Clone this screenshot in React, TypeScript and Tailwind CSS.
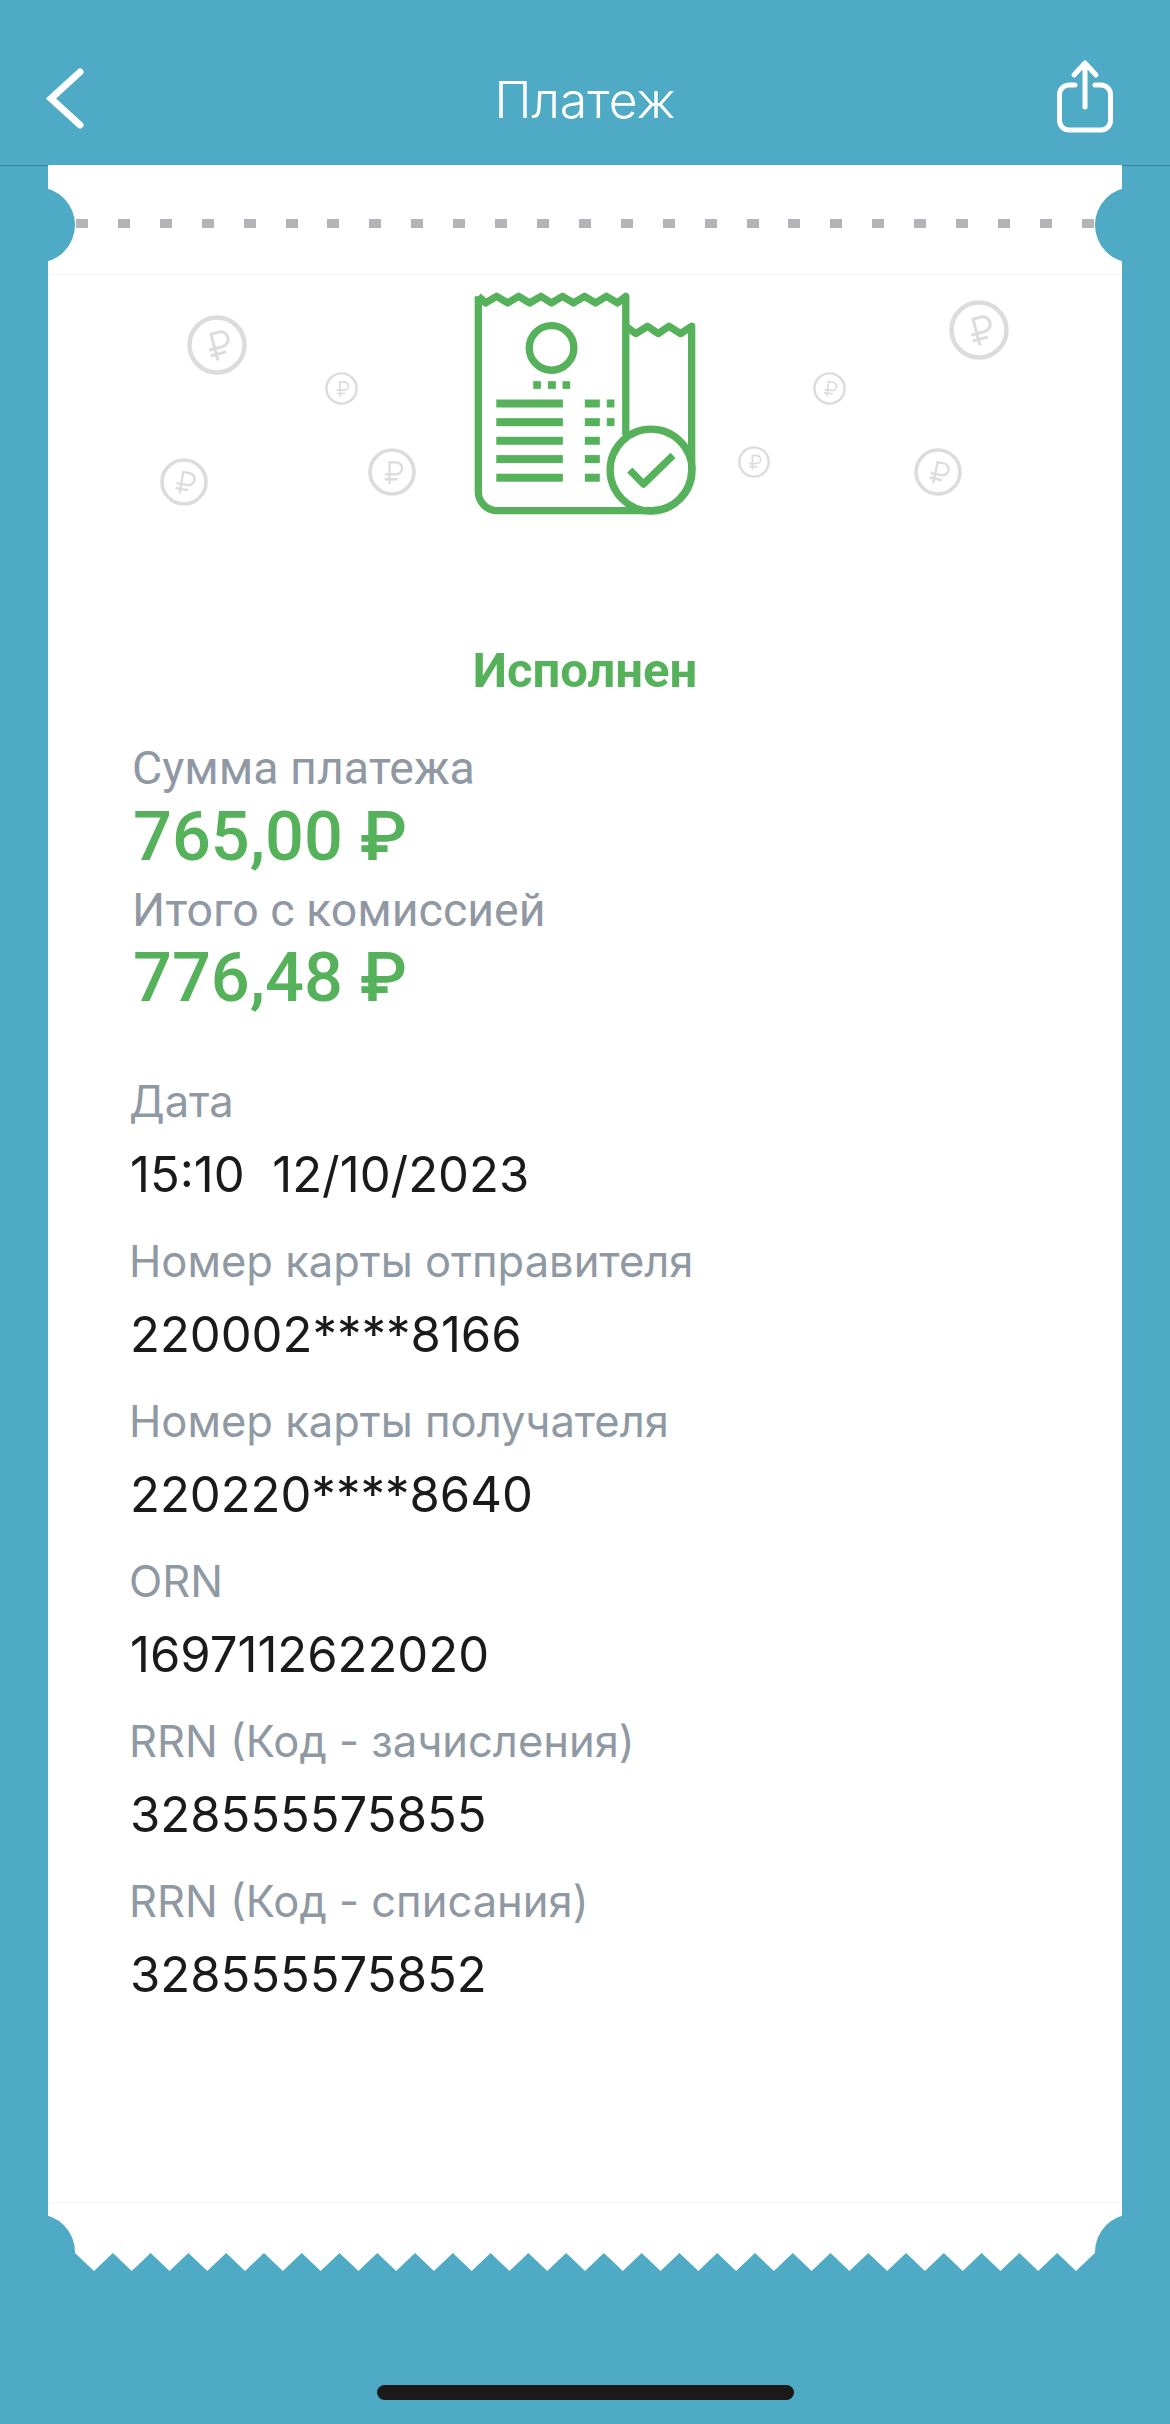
const DETAILS = [
  { label: "Дата", value: "15:10  12/10/2023" },
  { label: "Номер карты отправителя", value: "220002****8166" },
  { label: "Номер карты получателя", value: "220220****8640" },
  { label: "ORN", value: "1697112622020" },
  { label: "RRN (Код - зачисления)", value: "328555575855" },
  { label: "RRN (Код - списания)", value: "328555575852" },
];

// coins scattered behind the receipt icon, coordinates relative to the hero block
const COINS = [
  { x: 217, y: 345, r: 30, rot: -15 },
  { x: 341, y: 388, r: 16.5, rot: 0 },
  { x: 184, y: 482, r: 24, rot: 10 },
  { x: 392, y: 472, r: 24, rot: 0 },
  { x: 979, y: 330, r: 30, rot: -15 },
  { x: 829, y: 388, r: 16.5, rot: 6 },
  { x: 754, y: 462, r: 16, rot: 0 },
  { x: 938, y: 472, r: 24, rot: 12 },
];

function Coin({ x, y, r, rot }: { x: number; y: number; r: number; rot: number }) {
  return (
    <svg
      className="absolute"
      width={r * 2}
      height={r * 2}
      viewBox="-30 -30 60 60"
      style={{ left: x - r - 48, top: y - r - 275 }}
    >
      <circle cx="0" cy="0" r="27.5" fill="none" stroke="#dcdcdc" strokeWidth="4.5" />
      <g transform={`rotate(${rot})`} fill="none" stroke="#dcdcdc" strokeWidth="3">
        <path d="M-3 15V-12H5A7.500 7.500 0 0 1 5 3H-9M-9 9H7" />
      </g>
    </svg>
  );
}

function ReceiptIcon() {
  return (
    <svg width="222" height="223" viewBox="100 65 665 670" fill="none" stroke="#55b25a" strokeWidth="22" strokeLinejoin="round">
      <path d="M112 78L134 98L167 78L200 98L233 78L266 98L300 78L332 98L365 78L398 98L431 78L464 98L497 78L530 98L555 78V495" />
      <path d="M112 78V665A57 57 0 0 0 169 722H631A122 122 0 0 0 753 600V168L720 190L685 168L652 190L620 168L585 190L555 168" />
      <circle cx="631" cy="600" r="123" />
      <circle cx="332" cy="233" r="67" />
      <path d="M567 600L608 642L697 556" />
      <g fill="#55b25a" stroke="none">
        <rect x="277" y="333" width="23" height="23" />
        <rect x="321" y="333" width="24" height="23" />
        <rect x="365" y="333" width="23" height="23" />
        <rect x="166" y="388" width="200" height="24" />
        <rect x="166" y="444" width="200" height="24" />
        <rect x="166" y="500" width="200" height="24" />
        <rect x="166" y="555" width="200" height="24" />
        <rect x="166" y="611" width="200" height="24" />
        <rect x="432" y="388" width="45" height="24" />
        <rect x="432" y="444" width="45" height="24" />
        <rect x="432" y="500" width="45" height="24" />
        <rect x="432" y="555" width="45" height="24" />
        <rect x="432" y="611" width="45" height="24" />
        <rect x="498" y="388" width="23" height="24" />
        <rect x="498" y="444" width="23" height="24" />
      </g>
    </svg>
  );
}

function Zigzag() {
  // white teeth hanging off the bottom of the card
  const pitch = 37.77;
  const pts: string[] = ["0,0", "27,0"];
  for (let i = 0; i <= 26; i++) {
    const tip = 46 + i * pitch;
    pts.push(`${tip},18`);
    pts.push(`${tip + pitch / 2},0`);
  }
  pts.push("1074,0");
  return (
    <svg className="block" width="1074" height="18" viewBox="0 0 1074 18">
      <polygon points={pts.join(" ")} fill="#ffffff" />
    </svg>
  );
}

export default function App() {
  return (
    <div className="relative flex h-[2424px] w-[1170px] flex-col overflow-hidden bg-[#4eaac5]">
      <header className="grid h-[166px] shrink-0 grid-cols-[1fr_auto_1fr] border-b border-[#3b8096] px-[53px]">
        <svg className="-ml-[8px] mt-[66px]" width="40" height="64" viewBox="0 0 40 64" fill="none" stroke="#fff" strokeWidth="7" strokeLinecap="round" strokeLinejoin="miter">
          <path d="M35 6L6 32.500L35 59" />
        </svg>
        <div className="pt-[72px] font-['Inter',sans-serif] text-[50px] font-light leading-[56px] text-white">Платеж</div>
        <svg className="mt-[58px] justify-self-end" width="64" height="80" viewBox="0 0 64 80" fill="none" stroke="#fff" strokeWidth="5" strokeLinecap="round" strokeLinejoin="round">
          <path d="M32 49V6M21 17L32 5L43 17" />
          <path d="M22 27H16A9.500 9.500 0 0 0 6.500 36.500V62.500A9.500 9.500 0 0 0 16 72H48A9.500 9.500 0 0 0 57.500 62.500V36.500A9.500 9.500 0 0 0 48 27H42" />
        </svg>
      </header>

      <main className="relative mx-[48px] -mt-px flex h-[2088px] shrink-0 flex-col bg-white">
        <div className="h-[110px] shrink-0 border-b border-[#f1f5f8] px-[28px] pt-[54px]">
          <div className="flex justify-between">
            {Array.from({ length: 25 }).map((_, i) => (
              <span key={i} className="h-[9px] w-[12px] bg-[#b2b4b7]" />
            ))}
          </div>
        </div>

        <section className="relative flex h-[368px] shrink-0 flex-col items-center pt-[17px]">
          {COINS.map((c, i) => (
            <Coin key={i} {...c} />
          ))}
          <ReceiptIcon />
        </section>

        <div className="text-center font-['Roboto',sans-serif] text-[49px] font-bold leading-[56px] text-[#55b25a]">Исполнен</div>

        <div className="mt-[36px] pl-[84px] font-['Roboto',sans-serif]">
          <div className="text-[46.500px] leading-[66px] text-[#9098a3]">Сумма платежа</div>
          <div className="mb-[6px] pl-px text-[68.500px] font-medium leading-[72px] text-[#55b25a]">765,00 ₽</div>
          <div className="-mt-[2px] text-[46.500px] leading-[66px] text-[#9098a3]">Итого с комиссией</div>
          <div className="mb-[6px] pl-px text-[68.500px] font-medium leading-[70px] text-[#55b25a]">776,48 ₽</div>
        </div>

        <div className="mt-[45px] pl-[81px] font-['Inter',sans-serif]">
          {DETAILS.map((row) => (
            <div key={row.label} className="mb-[12px]">
              <div className="text-[43.500px] leading-[74px] text-[#8f99a3]">{row.label}</div>
              <div className="whitespace-pre pl-px text-[49px] leading-[74px] text-[#1a1a1a]">{row.value}</div>
            </div>
          ))}
        </div>

        <div className="absolute bottom-[50px] left-0 right-0 border-b border-[#f1f5f8]" />
        <div className="absolute -bottom-[18px] left-0">
          <Zigzag />
        </div>
      </main>

      {/* punched holes on the ticket edge */}
      <span className="absolute left-[-1px] top-[187px] h-[76px] w-[76px] rounded-full bg-[#4eaac5]" />
      <span className="absolute right-[-1px] top-[187px] h-[76px] w-[76px] rounded-full bg-[#4eaac5]" />
      <span className="absolute left-[-1px] top-[2214px] h-[76px] w-[76px] rounded-full bg-[#4eaac5]" />
      <span className="absolute right-[-1px] top-[2214px] h-[76px] w-[76px] rounded-full bg-[#4eaac5]" />

      <div className="absolute bottom-[24px] left-[377px] h-[15px] w-[417px] rounded-full bg-[#1a1a1a]" />
    </div>
  );
}
